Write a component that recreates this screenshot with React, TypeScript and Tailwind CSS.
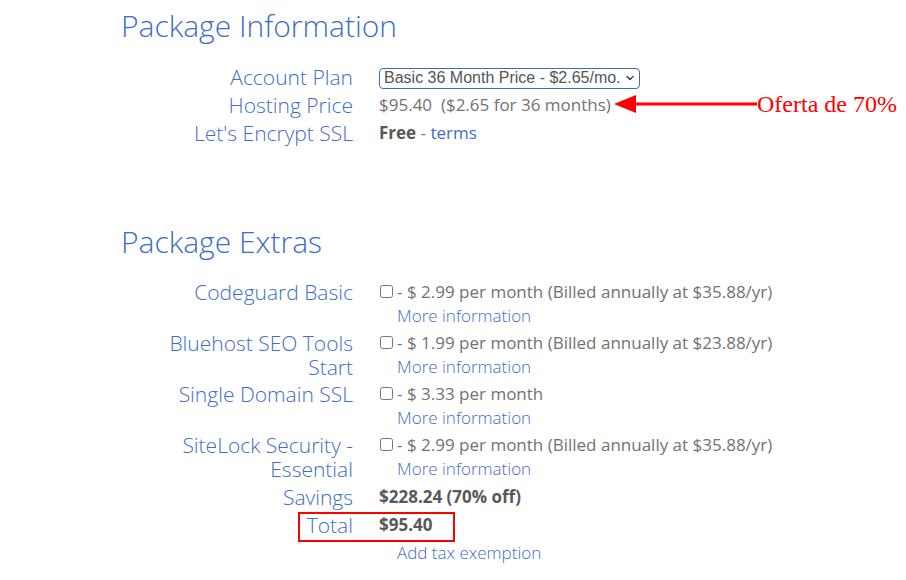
import { ChevronDown } from 'lucide-react';

type Row = {
  label: string;
  price: string;
  billed?: string;
};

const extras: Row[] = [
  { label: 'Codeguard Basic', price: '2.99', billed: '35.88' },
  { label: 'Bluehost SEO Tools Start', price: '1.99', billed: '23.88' },
  { label: 'Single Domain SSL', price: '3.33' },
  { label: 'SiteLock Security - Essential', price: '2.99', billed: '35.88' },
];

const Label = ({ children, pad = 'py-[2px]' }: { children?: React.ReactNode; pad?: string }) => (
  <div className={`text-right text-[21px] leading-[24px] font-light text-[#3d6ec8] ${pad}`}>{children}</div>
);

const Value = ({ children, pad = 'py-[2px]' }: { children: React.ReactNode; pad?: string }) => (
  <div className={`text-[17px] leading-[24px] text-[#727272] ${pad}`}>{children}</div>
);

export default function App() {
  return (
    <div className="relative w-[906px] h-[580px] bg-white overflow-hidden font-['Open_Sans',sans-serif]">
      <div className="pl-[121px] pt-[6px]">
        <h2 className="text-[30px] leading-[40px] font-light text-[#3d6ec8]">Package Information</h2>

        <div className="mt-[17px] grid grid-cols-[200px_1fr] gap-x-[26px] ml-[32px]">
          <Label>Account Plan</Label>
          <Value>
            <div className="relative inline-flex items-center">
              <select className="appearance-none h-[21px] pl-[4px] pr-[18px] border border-[#3a6fb8] rounded-[4px] bg-white text-[16px] leading-[18px] text-[#555] font-['Liberation_Sans',Arial,sans-serif]">
                <option>Basic 36 Month Price - $2.65/mo.</option>
              </select>
              <ChevronDown className="absolute right-[4px] w-[12px] h-[12px] text-[#444] pointer-events-none" strokeWidth={3} />
            </div>
          </Value>

          <Label>Hosting Price</Label>
          <Value>$95.40&nbsp;&nbsp;($2.65 for 36 months)</Value>

          <Label>Let's Encrypt SSL</Label>
          <Value>
            <span className="font-bold text-[#595959]">Free</span> - <a className="text-[#3d6ec8]">terms</a>
          </Value>
        </div>

        <h2 className="mt-[75px] text-[30px] leading-[40px] font-light text-[#3d6ec8]">Package Extras</h2>

        <div className="mt-[16px] grid grid-cols-[200px_1fr] gap-x-[26px] ml-[32px]">
          {extras.map((row) => (
            <div key={row.label} className="contents">
              <Label pad="py-[1.5px]">{row.label}</Label>
              <Value pad="py-[1.5px]">
                <div className="flex items-center gap-[4px]">
                  <input type="checkbox" className="w-[13px] h-[13px] m-0 ml-[1px]" />
                  <span>
                    - $ {row.price} per month
                    {row.billed && ` (Billed annually at $${row.billed}/yr)`}
                  </span>
                </div>
                <a className="block pl-[18px] font-light text-[#3d6ec8]">More information</a>
              </Value>
            </div>
          ))}

          <Label pad="pt-[3px] pb-[2px]">Savings</Label>
          <Value pad="pt-[3px] pb-[2px]">
            <span className="font-bold text-[#595959]">$228.24 (70% off)</span>
          </Value>

          <Label>Total</Label>
          <Value>
            <span className="font-bold text-[#595959]">$95.40</span>
          </Value>

          <Label />
          <Value>
            <a className="block pl-[18px] font-light text-[#3d6ec8]">Add tax exemption</a>
          </Value>
        </div>
      </div>

      {/* annotation: total highlight */}
      <div className="absolute left-[298px] top-[512px] w-[157px] h-[30px] border-2 border-[#f00]" />

      {/* annotation: arrow + label */}
      <div className="absolute left-[614px] top-[89px] flex items-center">
        <svg width="143" height="30" viewBox="0 0 143 30">
          <polygon points="0,15 22,6 22,24" fill="#f00" />
          <rect x="20" y="13.5" width="123" height="3" fill="#f00" />
        </svg>
        <span className="text-[24px] leading-[30px] text-[#f00] font-['Liberation_Serif','Times_New_Roman',serif]">
          Oferta de 70%
        </span>
      </div>
    </div>
  );
}
